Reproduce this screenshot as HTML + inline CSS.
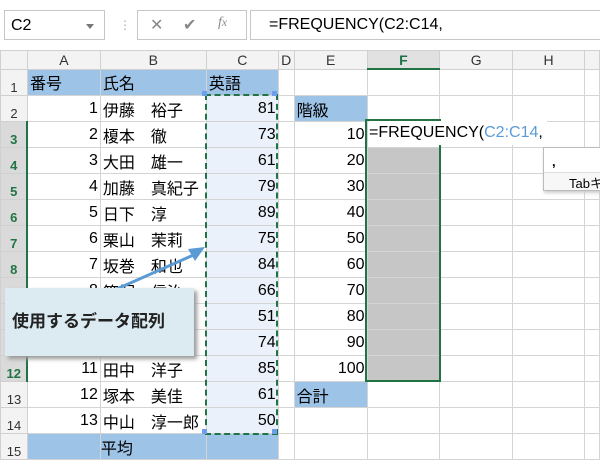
<!DOCTYPE html>
<html><head><meta charset="utf-8"><style>
body{margin:0;width:600px;height:464px;overflow:hidden;background:#fff;font-family:"Liberation Sans","Noto Sans CJK JP",sans-serif;position:relative}
.tb{position:absolute;left:0;top:0;width:600px;height:50px;background:#fff}
.nb{position:absolute;left:4px;top:10px;width:101px;height:30px;border:1px solid #c6c6c6;font-size:16px;line-height:30px;padding-left:6px;box-sizing:border-box}
.nb:after{content:"";position:absolute;right:10px;top:13px;border:4px solid transparent;border-top:5px solid #777}
.btns{position:absolute;left:137px;top:10px;width:110px;height:30px;border:1px solid #c6c6c6;box-sizing:border-box;color:#888;font-size:16px}
.fb{position:absolute;left:250px;top:10px;width:360px;height:30px;border:1px solid #c6c6c6;box-sizing:border-box;font-size:16px;line-height:28px;padding-left:18px}
table{position:absolute;left:0;top:50px;border-collapse:collapse;table-layout:fixed;font-size:16px}
td{border:1px solid #d4d4d4;height:25px;padding:0 2px;white-space:nowrap;overflow:visible}
tr.h td{height:17px;background:#f3f3f3;text-align:center;font-size:14px;color:#333;border-color:#d0d0d0}
td.r{background:#f3f3f3;text-align:center;font-size:13px;color:#333;vertical-align:bottom;border-color:#d0d0d0}
td.rs{background:#dadada;color:#217346;font-weight:bold;border-right:2px solid #217346}
.bl{background:#9dc3e6}
.n{text-align:right}
.c{background:#ebf1fb;text-align:right}
.g{background:#c6c6c6}
</style></head><body>
<div class="tb">
<div class="nb">C2</div>
<div style="position:absolute;left:119px;top:18px;color:#aaa;font-size:12px">⋮</div>
<div class="btns"><span style="position:absolute;left:12px;top:4px">✕</span><span style="position:absolute;left:45px;top:4px">✔</span><span style="position:absolute;left:80px;top:4px;font-family:'Liberation Serif',serif;font-style:italic;font-size:14px">f<small>x</small></span></div>
<div class="fb">=FREQUENCY(C2:C14,</div>
</div>
<table>
<colgroup><col style="width:27px"><col style="width:73px"><col style="width:106px"><col style="width:72px"><col style="width:16px"><col style="width:73px"><col style="width:73px"><col style="width:73px"><col style="width:72px"><col style="width:15px"></colgroup>
<tr class="h"><td></td><td>A</td><td>B</td><td>C</td><td>D</td><td>E</td><td style="background:#e1e1e1;color:#217346;font-weight:bold;border-bottom:2px solid #217346">F</td><td>G</td><td>H</td><td></td></tr>
<tr><td class="r">1</td><td class="bl">番号</td><td class="bl">氏名</td><td class="bl">英語</td><td></td><td></td><td></td><td></td><td></td><td></td></tr>
<tr><td class="r">2</td><td class="n">1</td><td>伊藤　裕子</td><td class="c">81</td><td></td><td class="bl">階級</td><td></td><td></td><td></td><td></td></tr>
<tr><td class="r rs">3</td><td class="n">2</td><td>榎本　徹</td><td class="c">73</td><td></td><td class="n">10</td><td></td><td></td><td></td><td></td></tr>
<tr><td class="r rs">4</td><td class="n">3</td><td>大田　雄一</td><td class="c">61</td><td></td><td class="n">20</td><td class="g"></td><td></td><td></td><td></td></tr>
<tr><td class="r rs">5</td><td class="n">4</td><td>加藤　真紀子</td><td class="c">79</td><td></td><td class="n">30</td><td class="g"></td><td></td><td></td><td></td></tr>
<tr><td class="r rs">6</td><td class="n">5</td><td>日下　淳</td><td class="c">89</td><td></td><td class="n">40</td><td class="g"></td><td></td><td></td><td></td></tr>
<tr><td class="r rs">7</td><td class="n">6</td><td>栗山　茉莉</td><td class="c">75</td><td></td><td class="n">50</td><td class="g"></td><td></td><td></td><td></td></tr>
<tr><td class="r rs">8</td><td class="n">7</td><td>坂巻　和也</td><td class="c">84</td><td></td><td class="n">60</td><td class="g"></td><td></td><td></td><td></td></tr>
<tr><td class="r rs">9</td><td class="n">8</td><td>篠塚　信治</td><td class="c">66</td><td></td><td class="n">70</td><td class="g"></td><td></td><td></td><td></td></tr>
<tr><td class="r rs">10</td><td class="n">9</td><td>島田　京子</td><td class="c">51</td><td></td><td class="n">80</td><td class="g"></td><td></td><td></td><td></td></tr>
<tr><td class="r rs">11</td><td class="n">10</td><td>田中　道</td><td class="c">74</td><td></td><td class="n">90</td><td class="g"></td><td></td><td></td><td></td></tr>
<tr><td class="r rs">12</td><td class="n">11</td><td>田中　洋子</td><td class="c">85</td><td></td><td class="n">100</td><td class="g"></td><td></td><td></td><td></td></tr>
<tr><td class="r">13</td><td class="n">12</td><td>塚本　美佳</td><td class="c">61</td><td></td><td class="bl">合計</td><td></td><td></td><td></td><td></td></tr>
<tr><td class="r">14</td><td class="n">13</td><td>中山　淳一郎</td><td class="c">50</td><td></td><td></td><td></td><td></td><td></td><td></td></tr>
<tr><td class="r">15</td><td class="bl"></td><td class="bl" style="padding-left:0">平均</td><td class="bl"></td><td></td><td></td><td></td><td></td><td></td><td></td></tr>
</table>
<!-- selection C2:C14 -->
<div style="position:absolute;left:205px;top:94px;width:69px;height:337px;border:2px dashed #217346"></div>
<div style="position:absolute;left:202px;top:91px;width:5px;height:5px;background:#6d9eeb"></div>
<div style="position:absolute;left:272px;top:91px;width:5px;height:5px;background:#6d9eeb"></div>
<div style="position:absolute;left:202px;top:429px;width:5px;height:5px;background:#6d9eeb"></div>
<div style="position:absolute;left:272px;top:429px;width:5px;height:5px;background:#6d9eeb"></div>
<!-- F3:F12 -->
<div style="position:absolute;left:365px;top:119px;width:72px;height:259px;border:2px solid #217346"></div>
<div style="position:absolute;left:369px;top:121px;height:24px;line-height:24px;font-size:16px;background:#fff;padding-right:4px;white-space:nowrap">=FREQUENCY(<span style="color:#5b9bd5">C2:C14</span>,</div>
<!-- tooltip -->
<div style="position:absolute;left:543px;top:147px;width:70px;height:42px;background:#fff;border:1px solid #bbb;box-shadow:1px 2px 3px #ccc;font-size:13px"><div style="padding:6px 0 0 8px;font-weight:bold">,</div><div style="position:absolute;top:24px;left:0;right:0;border-top:1px solid #ddd;background:#f7f7f7;padding-left:25px;height:17px">Tabキ</div></div>
<!-- callout -->
<svg style="position:absolute;left:0;top:0" width="600" height="464"><line x1="110" y1="292" x2="198" y2="253" stroke="#5b9bd5" stroke-width="3"/><polygon points="205,247 188,249 195,261" fill="#5b9bd5"/></svg>
<div style="position:absolute;left:5px;top:288px;width:189px;height:68px;background:#dcebf2;box-shadow:3px 3px 4px #999;font-size:17px;font-weight:bold;line-height:68px;padding-left:7px;box-sizing:border-box;color:#222">使用するデータ配列</div>
</body></html>
